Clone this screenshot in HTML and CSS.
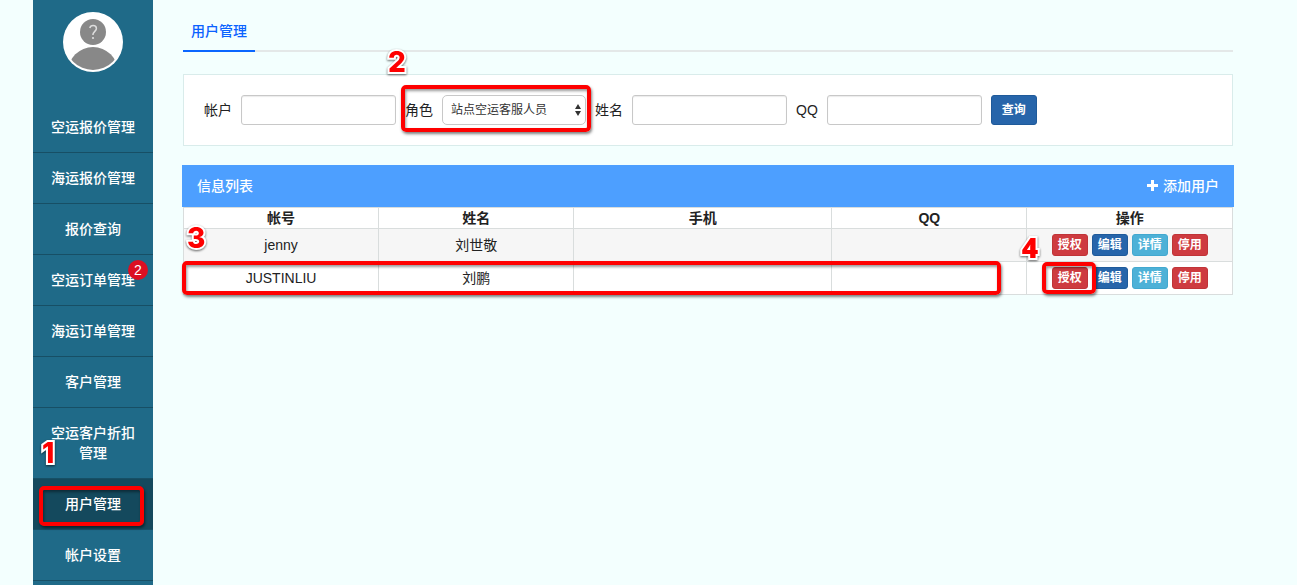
FILE: index.html
```html
<!DOCTYPE html>
<html lang="zh-CN">
<head>
    <meta charset="UTF-8">
    <meta name="viewport" content="width=device-width, initial-scale=1.0">
    <title>用户管理</title>
    <link rel="stylesheet" href="styles.css">
</head>
<body>

<div class="layout">
    <aside class="sidebar">
        <div class="avatar">
            <svg width="60" height="60" viewBox="0 0 60 60" aria-hidden="true">
                <defs>
                    <clipPath id="avatarClip"><circle cx="30" cy="30" r="28"/></clipPath>
                </defs>
                <circle cx="30" cy="30" r="30" fill="#fff"/>
                <circle cx="30" cy="20" r="13" fill="#888"/>
                <circle cx="30" cy="60" r="25" fill="#888" clip-path="url(#avatarClip)"/>
                <path d="M26.800 16c.4-1.700 1.600-2.400 3.300-2.400 2 0 3.300 1.200 3.300 2.900 0 2.700-3.500 3.200-3.500 6.500" fill="none" stroke="#ddd" stroke-width="1.500"/>
                <circle cx="30" cy="26" r="1.100" fill="#ddd"/>
            </svg>
        </div>
        <nav>
            <a href="#">空运报价管理</a>
            <a href="#">海运报价管理</a>
            <a href="#">报价查询</a>
            <a href="#">空运订单管理<span class="badge">2</span></a>
            <a href="#">海运订单管理</a>
            <a href="#">客户管理</a>
            <a href="#">空运客户折扣管理</a>
            <a href="#" class="active">用户管理<span class="mark mark-menu"></span><span class="step step-1">1</span></a>
            <a href="#">帐户设置</a>
        </nav>
    </aside>

    <main class="content">
        <div class="tabs">
            <a href="#" class="tab">用户管理</a>
        </div>

        <form class="search">
            <label for="account">帐户</label>
            <input type="text" id="account">
            <div class="role">
                <label for="role">角色</label>
                <div class="select-box">
                    <select id="role">
                        <option>站点空运客服人员</option>
                    </select>
                    <svg class="arrows" width="6" height="12" viewBox="0 0 6 12" aria-hidden="true">
                        <path d="M3 0l3 5H0zM3 12L0 7h6z" fill="#333"/>
                    </svg>
                </div>
                <span class="mark mark-role"></span>
                <span class="step step-2">2</span>
            </div>
            <label for="name">姓名</label>
            <input type="text" id="name">
            <label for="qq">QQ</label>
            <input type="text" id="qq">
            <button type="button" class="btn btn-search">查询</button>
        </form>

        <section class="panel">
            <div class="panel-head">
                <h2>信息列表</h2>
                <a href="#">
                    <svg width="12" height="11" viewBox="0 0 12 11" aria-hidden="true">
                        <path d="M4 0h3v4h4v3H7v4H4V7H0V4h4z" fill="#fff"/>
                    </svg>
                    添加用户
                </a>
            </div>
            <div class="table-box">
                <table>
                    <thead>
                        <tr>
                            <th class="col-md">帐号</th>
                            <th class="col-md">姓名</th>
                            <th class="col-lg">手机</th>
                            <th class="col-md">QQ</th>
                            <th>操作</th>
                        </tr>
                    </thead>
                    <tbody>
                        <tr>
                            <td>jenny</td>
                            <td>刘世敬</td>
                            <td></td>
                            <td></td>
                            <td>
                                <div class="actions">
                                    <button type="button" class="btn btn-red">授权</button>
                                    <button type="button" class="btn">编辑</button>
                                    <button type="button" class="btn btn-cyan">详情</button>
                                    <button type="button" class="btn btn-red">停用</button>
                                </div>
                            </td>
                        </tr>
                        <tr>
                            <td>JUSTINLIU</td>
                            <td>刘鹏</td>
                            <td></td>
                            <td></td>
                            <td>
                                <div class="actions">
                                    <button type="button" class="btn btn-red">授权</button>
                                    <button type="button" class="btn">编辑</button>
                                    <button type="button" class="btn btn-cyan">详情</button>
                                    <button type="button" class="btn btn-red">停用</button>
                                    <span class="mark mark-grant"></span>
                                    <span class="step step-4">4</span>
                                </div>
                            </td>
                        </tr>
                    </tbody>
                </table>
                <span class="mark mark-row"></span>
                <span class="step step-3">3</span>
            </div>
        </section>
    </main>
</div>

</body>
</html>
```

FILE: styles.css
```css
/* Global Styles */
* {
    box-sizing: border-box;
    margin: 0;
    padding: 0;
}
body {
    background-color: #f3fffe;
    color: #222;
    font-family: 'Liberation Sans', 'Noto Sans CJK SC', sans-serif;
    font-size: 14px;
    line-height: 20px;
}
a {
    text-decoration: none;
    color: inherit;
}
input,
select,
button {
    font-family: inherit;
}
.layout {
    display: flex;
    gap: 30px;
    min-height: 100vh;
    padding: 0 64px 0 33px;
}

/* Sidebar */
.sidebar {
    flex: 0 0 120px;
    background-color: #1f6a88;
    color: #fff;
}
.avatar {
    display: flex;
    justify-content: center;
    height: 102px;
    padding-top: 12px;
}
.sidebar nav a {
    display: block;
    position: relative;
    padding: 15px 16px;
    border-bottom: 1px solid #174f65;
    text-align: center;
    font-weight: 500;
}
.sidebar nav a.active {
    background-color: #14495d;
}
.badge {
    position: absolute;
    top: 5px;
    right: 5px;
    width: 20px;
    height: 20px;
    border-radius: 50%;
    background-color: #dc0f22;
    font-size: 14px;
    line-height: 20px;
}

/* Content */
.content {
    flex: 1;
    min-width: 0;
}
.tabs {
    display: flex;
    height: 52px;
    padding-top: 21px;
    border-bottom: 2px solid #e4e8e8;
}
.tab {
    height: 31px;
    padding: 0 8px;
    border-bottom: 2px solid #0a66ff;
    color: #0a62ff;
    font-weight: 500;
}
.search {
    display: flex;
    align-items: center;
    gap: 9px;
    margin-top: 22px;
    padding: 20px;
    background-color: #fff;
    border: 1px solid #d9eceb;
}
.search input,
.search select {
    height: 30px;
    background-color: #fff;
    border: 1px solid #c8c8c8;
    border-radius: 3px;
}
.search input {
    width: 155px;
    padding: 0 8px;
    box-shadow: inset 0 1px 1px rgba(0, 0, 0, 0.08);
}
.role {
    display: flex;
    align-items: center;
    gap: 9px;
    position: relative;
}
.select-box {
    position: relative;
}
.search select {
    display: block;
    width: 144px;
    padding: 0 8px;
    border-radius: 5px;
    appearance: none;
    color: #333;
    font-size: 12px;
}
.arrows {
    position: absolute;
    top: 9px;
    right: 5px;
    pointer-events: none;
}

/* Buttons */
.btn {
    height: 22px;
    padding: 0 5px;
    border: 1px solid #1f5a9a;
    border-radius: 3px;
    background-color: #2765aa;
    color: #fff;
    font-size: 12px;
    font-weight: 700;
    line-height: 20px;
    cursor: pointer;
}
.btn-search {
    height: 30px;
    padding: 0 10px;
}
.btn-red {
    border-color: #c03438;
    background-color: #ce3b40;
}
.btn-cyan {
    border-color: #42a8cf;
    background-color: #4db1d7;
}

/* User list */
.panel {
    margin-top: 19px;
}
.panel-head {
    display: flex;
    justify-content: space-between;
    align-items: center;
    height: 42px;
    margin: 0 -1px;
    padding: 0 15px;
    background-color: #4d9fff;
    color: #fff;
}
.panel-head h2,
.panel-head a {
    font-size: 14px;
    font-weight: 500;
}
.table-box {
    position: relative;
}
table {
    width: 100%;
    table-layout: fixed;
    border-collapse: collapse;
    border: 1px solid #d9eceb;
    background-color: #fff;
}
th,
td {
    border: 1px solid #d9dddd;
    text-align: center;
}
th {
    height: 21px;
    font-weight: 700;
}
td {
    height: 33px;
}
tbody tr:first-child {
    background-color: #f6f6f6;
}
.col-md {
    width: 18.6%;
}
.col-lg {
    width: 24.6%;
}
.actions {
    display: inline-flex;
    gap: 4px;
    position: relative;
    vertical-align: middle;
}

/* Step marks */
.mark {
    position: absolute;
    border: 4px solid #fe0000;
    border-radius: 5px;
    box-shadow: 1px 2px 3px rgba(0, 0, 0, 0.5), inset 1px 2px 3px rgba(0, 0, 0, 0.4);
    pointer-events: none;
}
.mark-menu {
    top: 7px;
    right: 9px;
    bottom: 3px;
    left: 6px;
}
.mark-role {
    top: -10px;
    right: -5px;
    bottom: -7px;
    left: -4px;
}
.mark-row {
    left: -1px;
    bottom: 0;
    width: 78%;
    height: 34px;
}
.mark-grant {
    top: -5px;
    left: -10px;
    width: 54px;
    height: 32px;
}
.step {
    position: absolute;
    color: #fe0000;
    font-family: Inter, 'Liberation Sans', sans-serif;
    font-size: 28px;
    font-weight: 800;
    line-height: 28px;
    -webkit-text-stroke: 4px #fff;
    paint-order: stroke fill;
    filter: drop-shadow(0 1px 1px rgba(0, 0, 0, 0.6));
    pointer-events: none;
}
.step-1 {
    top: -40px;
    left: 9px;
}
.step-2 {
    top: -47px;
    left: -17px;
}
.step-3 {
    top: 17px;
    left: 4px;
}
.step-4 {
    top: -34px;
    left: -30px;
    font-family: 'Open Sans', sans-serif;
}
```
